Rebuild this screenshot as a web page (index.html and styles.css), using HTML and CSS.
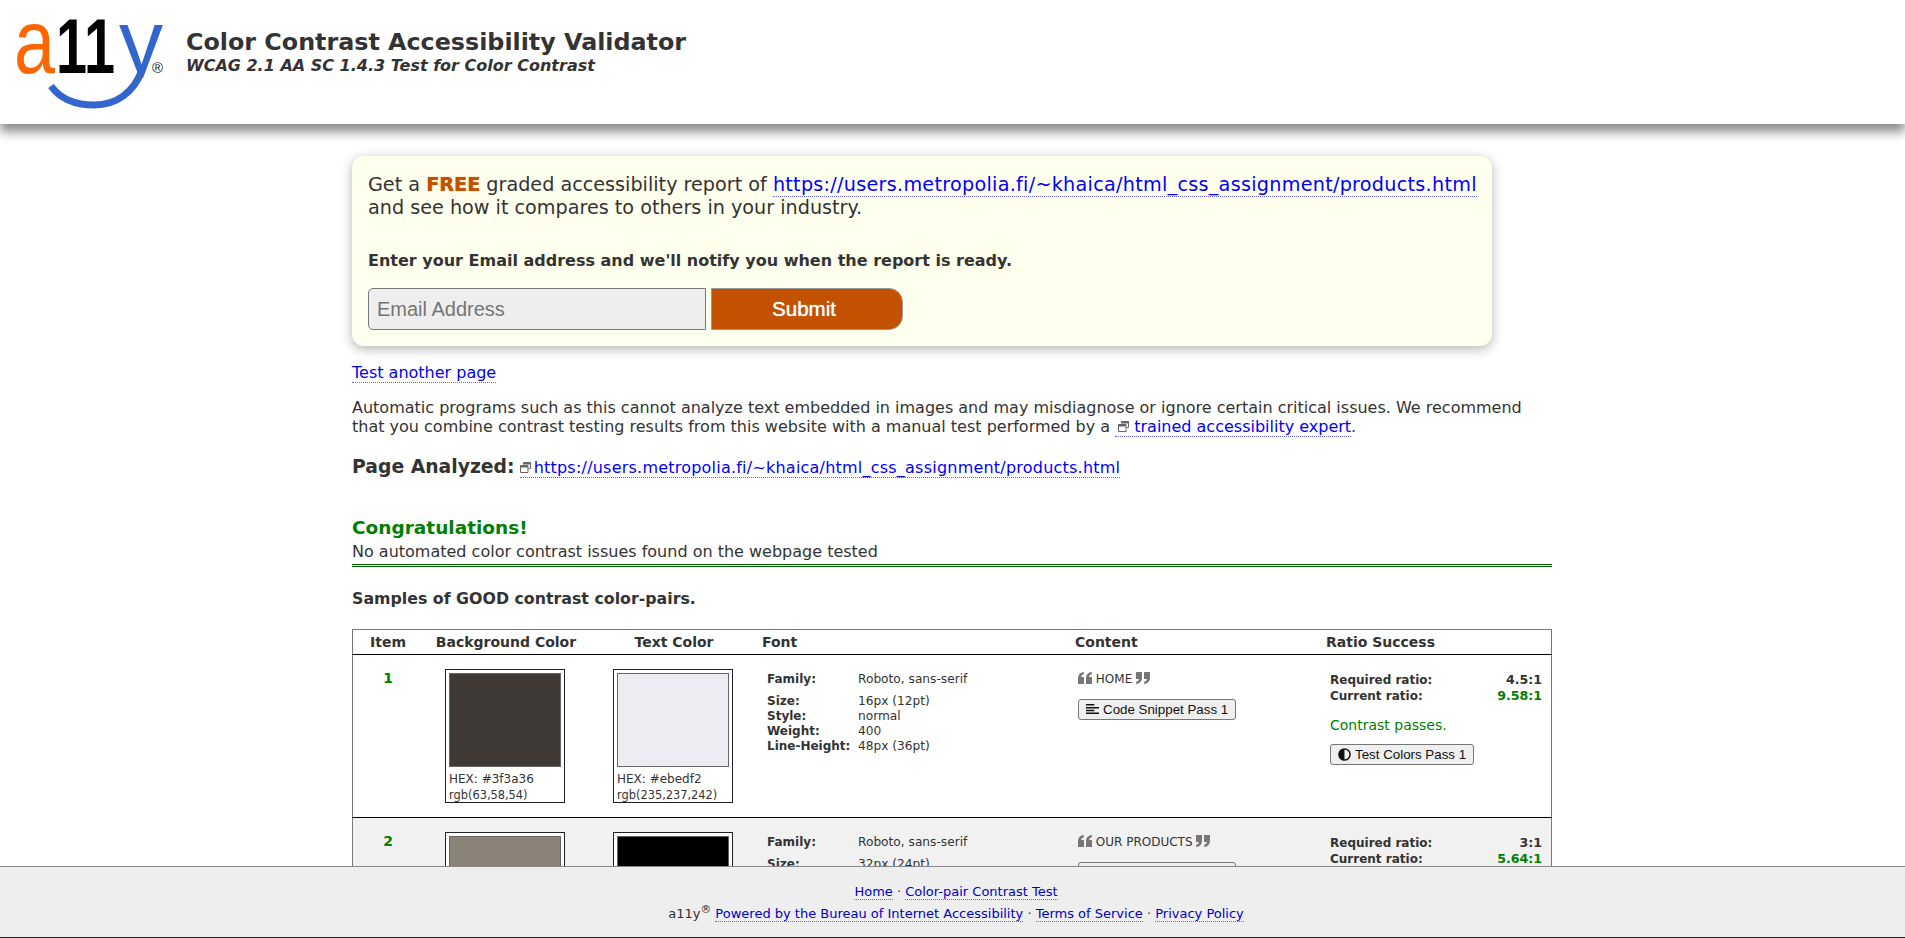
FILE: index.html
```html
<!DOCTYPE html>
<html lang="en">

<head>
    <meta charset="UTF-8">
    <title>Color Contrast Accessibility Validator</title>
    <link rel="stylesheet" href="styles.css">
</head>

<body>
    <svg class="icon-defs" width="0" height="0" aria-hidden="true">
        <symbol id="ext" viewBox="0 0 11 11">
            <path d="M3.5 .5h7v6h-2M.5 3.5h7.500v7h-7.500z" fill="#fff" stroke="#666" />
            <path d="M3 1.500h7.500M0 4.500h8" stroke="#666" stroke-width="2" />
        </symbol>
        <symbol id="ql" viewBox="0 0 14 12">
            <path d="M0 7C0 3 1.500 .8 5.800 0v2.300C4 2.800 3.300 3.600 3.200 5H6v7H0zM8 7c0-4 1.500-6.200 5.800-7v2.300c-1.800.5-2.500 1.300-2.600 2.700H14v7H8z" fill="#777" />
        </symbol>
        <symbol id="qr" viewBox="0 0 14 12">
            <path d="M6 5c0 4-1.500 6.200-5.800 7V9.700C2 9.200 2.700 8.400 2.800 7H0V0h6zM14 5c0 4-1.500 6.200-5.800 7V9.700c1.800-.5 2.500-1.300 2.600-2.700H8V0h6z" fill="#777" />
        </symbol>
        <symbol id="lines" viewBox="0 0 14 12">
            <path d="M0 1h9M0 4h14M0 7h9M0 10h14" stroke="#111" stroke-width="1.600" />
        </symbol>
        <symbol id="half" viewBox="0 0 14 14">
            <circle cx="7" cy="7" r="6" fill="#fff" stroke="#111" stroke-width="1.600" />
            <path d="M7 1a6 6 0 0 0 0 12z" fill="#111" />
        </symbol>
        <clipPath id="y-clip">
            <rect x="100" y="-20" width="60" height="86" />
        </clipPath>
    </svg>

    <header class="top">
        <svg class="logo" viewBox="0 0 152 100" role="img" aria-label="a11y">
            <text x="0" y="61" class="logo-a" textLength="41" lengthAdjust="spacingAndGlyphs">a</text>
            <text x="42" y="61" class="logo-1" textLength="59" lengthAdjust="spacingAndGlyphs">11</text>
            <text x="105" y="61" class="logo-y" textLength="44" lengthAdjust="spacingAndGlyphs" clip-path="url(#y-clip)">y</text>
            <path d="M37 74C47 88 62 93 80 93 103 93 120 80 128 58" fill="none" stroke="#36c" stroke-width="7" />
            <text x="138" y="61" class="logo-r">®</text>
        </svg>
        <div class="titles">
            <h1>Color Contrast Accessibility Validator</h1>
            <p>WCAG 2.1 AA SC 1.4.3 Test for Color Contrast</p>
        </div>
    </header>

    <main class="container">
        <section class="offer">
            <p class="offer-text">Get a <strong class="free">FREE</strong> graded accessibility report of <a href="#" class="url">https://users.metropolia.fi/~khaica/html_css_assignment/products.html</a> and see how it compares to others in your industry.</p>
            <p class="offer-note">Enter your Email address and we'll notify you when the report is ready.</p>
            <form class="offer-form">
                <input type="text" placeholder="Email Address">
                <button type="button">Submit</button>
            </form>
        </section>

        <p class="another"><a href="#">Test another page</a></p>
        <p class="disclaimer">Automatic programs such as this cannot analyze text embedded in images and may misdiagnose or ignore certain critical issues. We recommend that you combine contrast testing results from this website with a manual test performed by a <a href="#"><svg class="ext"><use href="#ext" /></svg>trained accessibility expert</a>.</p>
        <p class="analyzed"><strong>Page Analyzed:</strong> <a href="#" class="url"><svg class="ext"><use href="#ext" /></svg>https://users.metropolia.fi/~khaica/html_css_assignment/products.html</a></p>

        <h2 class="congrats">Congratulations!</h2>
        <p class="no-issues">No automated color contrast issues found on the webpage tested</p>
        <p class="samples">Samples of GOOD contrast color-pairs.</p>

        <table>
            <thead>
                <tr>
                    <th class="c-item">Item</th>
                    <th class="c-bg">Background Color</th>
                    <th class="c-text">Text Color</th>
                    <th class="c-font left">Font</th>
                    <th class="c-content left">Content</th>
                    <th class="c-ratio left">Ratio Success</th>
                </tr>
            </thead>
            <tbody>
                <tr>
                    <td><div class="num">1</div></td>
                    <td>
                        <div class="swatch">
                            <div class="chip chip-dark"></div>
                            <div class="hex">HEX: #3f3a36</div>
                            <div class="rgb">rgb(63,58,54)</div>
                        </div>
                    </td>
                    <td>
                        <div class="swatch">
                            <div class="chip chip-light"></div>
                            <div class="hex">HEX: #ebedf2</div>
                            <div class="rgb">rgb(235,237,242)</div>
                        </div>
                    </td>
                    <td>
                        <dl class="font-info">
                            <dt class="first">Family:</dt><dd class="first">Roboto, sans-serif</dd>
                            <dt>Size:</dt><dd>16px (12pt)</dd>
                            <dt>Style:</dt><dd>normal</dd>
                            <dt>Weight:</dt><dd>400</dd>
                            <dt>Line-Height:</dt><dd>48px (36pt)</dd>
                        </dl>
                    </td>
                    <td>
                        <div class="quote"><svg class="q"><use href="#ql" /></svg> HOME <svg class="q"><use href="#qr" /></svg></div>
                        <button type="button" class="small-btn"><svg class="btn-icon"><use href="#lines" /></svg>Code Snippet Pass 1</button>
                    </td>
                    <td>
                        <div class="ratio first-ratio"><span>Required ratio:</span><b>4.5:1</b></div>
                        <div class="ratio"><span>Current ratio:</span><b class="good">9.58:1</b></div>
                        <p class="passes">Contrast passes.</p>
                        <button type="button" class="small-btn"><svg class="btn-icon"><use href="#half" /></svg>Test Colors Pass 1</button>
                    </td>
                </tr>
                <tr class="alt">
                    <td><div class="num">2</div></td>
                    <td>
                        <div class="swatch">
                            <div class="chip chip-taupe"></div>
                        </div>
                    </td>
                    <td>
                        <div class="swatch">
                            <div class="chip chip-black"></div>
                        </div>
                    </td>
                    <td>
                        <dl class="font-info">
                            <dt class="first">Family:</dt><dd class="first">Roboto, sans-serif</dd>
                            <dt>Size:</dt><dd>32px (24pt)</dd>
                        </dl>
                    </td>
                    <td>
                        <div class="quote"><svg class="q"><use href="#ql" /></svg> OUR PRODUCTS <svg class="q"><use href="#qr" /></svg></div>
                        <button type="button" class="small-btn"><svg class="btn-icon"><use href="#lines" /></svg>Code Snippet Pass 2</button>
                    </td>
                    <td>
                        <div class="ratio first-ratio"><span>Required ratio:</span><b>3:1</b></div>
                        <div class="ratio"><span>Current ratio:</span><b class="good">5.64:1</b></div>
                    </td>
                </tr>
            </tbody>
        </table>
    </main>

    <footer class="bottom">
        <p><a href="#">Home</a> · <a href="#">Color-pair Contrast Test</a></p>
        <p>a11y<sup>®</sup> <a href="#">Powered by the Bureau of Internet Accessibility</a> · <a href="#">Terms of Service</a> · <a href="#">Privacy Policy</a></p>
    </footer>
</body>

</html>
```

FILE: styles.css
```css
html {
    overflow: hidden;
    height: 100%;
}

body {
    font-family: "DejaVu Sans", Verdana, sans-serif;
    font-size: 16px;
    color: #333;
    margin: 0;
    height: 100%;
    background-color: #fff;
}

a {
    color: #00f;
    text-decoration: none;
    border-bottom: 1px dotted #66f;
}

p {
    margin: 0;
}

.url {
    letter-spacing: 0.22px;
}

.offer-text .url {
    letter-spacing: 0.27px;
}

.icon-defs {
    position: absolute;
}

.top {
    display: flex;
    height: 124px;
    padding-left: 14px;
    box-sizing: border-box;
    background-color: #fff;
    box-shadow: 0 8px 10px rgba(0, 0, 0, 0.45);
}

.logo {
    width: 152px;
    height: 100px;
    margin-top: 12px;
    flex: none;
    overflow: visible;
}

.logo-a,
.logo-1,
.logo-y {
    font-family: "Liberation Sans", Arial, sans-serif;
}

.logo-a {
    font-size: 90px;
    fill: #f60;
}

.logo-1 {
    font-size: 78px;
    font-weight: bold;
    fill: #000;
}

.logo-y {
    font-size: 90px;
    fill: #36c;
}

.logo-r {
    font-family: "Liberation Sans", Arial, sans-serif;
    font-size: 15px;
    fill: #222;
}

.titles {
    margin: 28px 0 0 20px;
}

.titles h1 {
    font-size: 23.8px;
    line-height: 28px;
    margin: 0;
}

.titles p {
    font-size: 16px;
    font-weight: bold;
    font-style: italic;
    line-height: 20px;
}

.container {
    width: 1200px;
    margin-left: 352px;
}

.offer {
    width: 1116px;
    margin-top: 32px;
    padding: 17px 8px 15px 16px;
    height: 158px;
    background-color: #ffe;
    border-radius: 12px;
    box-shadow: 0 3px 12px rgba(0, 0, 0, 0.3);
}

.offer-text {
    font-size: 19.2px;
    line-height: 23px;
}

.free {
    color: #c25100;
    text-shadow: 0 0 1px #c25100;
}

.offer-note {
    font-weight: bold;
    margin-top: 32px;
    line-height: 20px;
}

.offer-form {
    display: flex;
    gap: 5px;
    margin-top: 17px;
}

.offer-form input {
    width: 338px;
    height: 42px;
    box-sizing: border-box;
    padding: 0 8px;
    font-family: "Liberation Sans", Arial, sans-serif;
    font-size: 20px;
    background-color: #eee;
    border: 1px solid #767676;
    border-radius: 5px 0 0 5px;
}

.offer-form button {
    width: 192px;
    height: 42px;
    padding: 0 6px 0 0;
    font-family: "Liberation Sans", Arial, sans-serif;
    font-size: 20.5px;
    color: #fff;
    text-shadow: 0 0 1px #fff;
    background-color: #c25100;
    border: 1px solid #999;
    border-radius: 0 14px 14px 0;
}

.another {
    margin-top: 17px;
    line-height: 20px;
}

.disclaimer {
    margin-top: 15px;
    line-height: 19px;
}

.disclaimer .ext {
    margin: 0 5px 2px 3px;
}

.ext {
    width: 11px;
    height: 11px;
    margin: 0 3px 2px 0;
    vertical-align: middle;
}

.analyzed {
    margin-top: 19px;
    line-height: 24px;
}

.analyzed strong {
    font-size: 18.8px;
}

.congrats {
    font-size: 18.5px;
    line-height: 24px;
    color: green;
    margin: 36px 0 0;
}

.no-issues {
    line-height: 20px;
    margin-top: 2px;
    padding-bottom: 2px;
    border-bottom: 3px double #060;
}

.samples {
    font-size: 15.8px;
    font-weight: bold;
    line-height: 20px;
    margin-top: 22px;
}

table {
    width: 100%;
    border-collapse: collapse;
    table-layout: fixed;
    margin-top: 20px;
    border: 1px solid #777;
    font-size: 14px;
}

th {
    height: 24px;
    padding: 0;
    font-size: 14px;
    text-align: center;
    border-bottom: 1px solid #000;
}

th.left {
    text-align: left;
}

td {
    vertical-align: top;
    padding: 14px 0 0;
}

tbody tr {
    height: 163px;
    border-bottom: 1px solid #000;
}

.alt {
    background-color: #f1f1f1;
}

.c-item {
    width: 70px;
}

.c-bg,
.c-text {
    width: 168px;
    padding-right: 2px;
    box-sizing: border-box;
}

.c-font {
    width: 313px;
    padding-left: 3px;
}

.c-content {
    width: 251px;
}

.num {
    margin-top: 1px;
    text-align: center;
    font-weight: bold;
    color: green;
}

.swatch {
    width: 120px;
    height: 134px;
    border: 1px solid #222;
    margin-left: 22px;
    padding: 3px;
    box-sizing: border-box;
    background-color: #fff;
    font-size: 12px;
}

.chip {
    height: 92px;
    border: 1px solid #666;
}

.chip-dark {
    background-color: #3f3a36;
}

.chip-light {
    background-color: #ebedf2;
}

.chip-taupe {
    background-color: #8c8378;
}

.chip-black {
    background-color: #000;
}

.hex {
    margin-top: 4px;
    line-height: 16px;
}

.rgb {
    font-size: 11.4px;
    line-height: 16px;
}

.font-info {
    display: grid;
    grid-template-columns: 91px 1fr;
    margin: 3px 0 0 8px;
    font-size: 12px;
    line-height: 15px;
}

.font-info dt {
    font-weight: bold;
}

.font-info dd {
    margin: 0;
    font-size: 12.2px;
}

.font-info .first {
    margin-bottom: 7px;
}

.quote {
    margin: 3px 0 0 3px;
    font-size: 12px;
    line-height: 15px;
}

.q {
    width: 14px;
    height: 12px;
    vertical-align: -1px;
}

.small-btn {
    display: block;
    height: 21px;
    padding: 0 7px;
    margin: 12px 0 0 3px;
    font-family: "Liberation Sans", Arial, sans-serif;
    font-size: 13.333px;
    color: #111;
    background-color: #efefef;
    border: 1px solid #767676;
    border-radius: 3px;
}

.btn-icon {
    width: 13px;
    height: 13px;
    margin-right: 4px;
    vertical-align: -2px;
}

.ratio {
    display: flex;
    justify-content: space-between;
    width: 212px;
    margin-left: 4px;
    font-size: 12px;
    font-weight: bold;
    line-height: 16px;
}

.ratio b {
    font-size: 12.6px;
}

.first-ratio {
    margin-top: 3px;
}

.good {
    color: green;
}

.passes {
    color: green;
    font-size: 14px;
    line-height: 20px;
    margin: 11px 0 0 4px;
}

.passes + .small-btn {
    margin: 9px 0 0 4px;
}

.bottom {
    position: fixed;
    left: 0;
    right: 0;
    bottom: 0;
    height: 72px;
    box-sizing: border-box;
    padding: 14px 0 0 7px;
    text-align: center;
    font-size: 13px;
    line-height: 22px;
    background-color: #eee;
    border-top: 1px solid #888;
    border-bottom: 1px solid #222;
}

.bottom a {
    color: #00c;
}

.bottom sup {
    line-height: 0;
}
```
